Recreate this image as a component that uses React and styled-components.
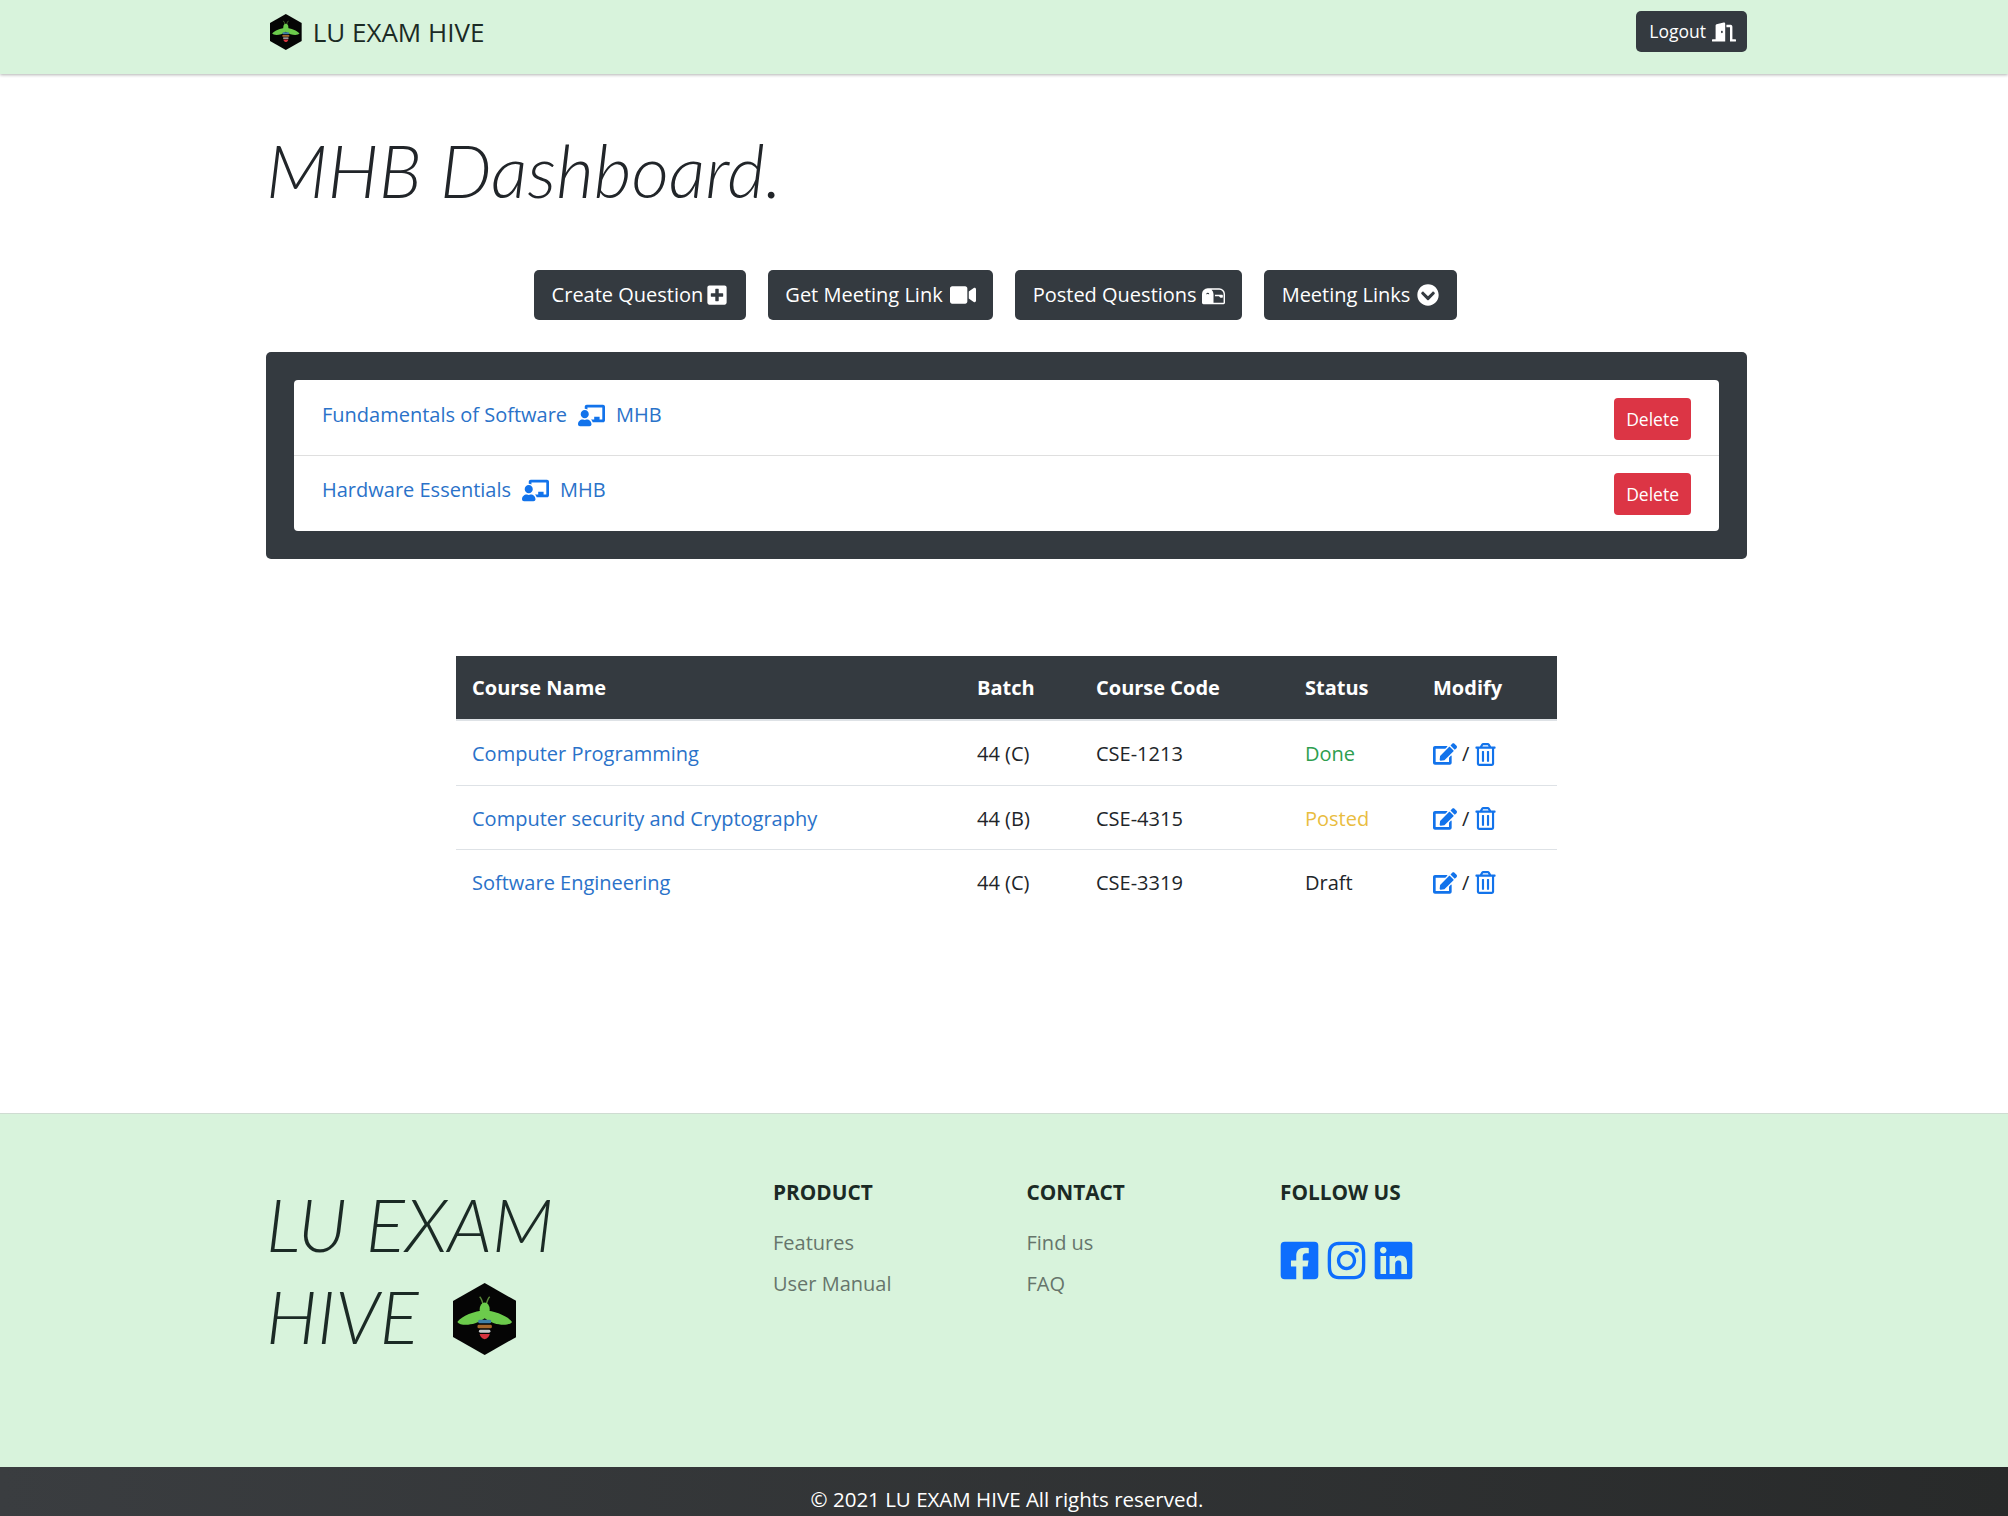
import React from 'react';
import styled, { createGlobalStyle } from 'styled-components';
import { BsMailbox2 } from 'react-icons/bs';
import {
  FaChalkboardTeacher,
  FaChevronCircleDown,
  FaDoorOpen,
  FaEdit,
  FaFacebookSquare,
  FaInstagram,
  FaLinkedin,
  FaPlusSquare,
  FaRegTrashAlt,
  FaVideo,
} from 'react-icons/fa';

const GlobalStyle = createGlobalStyle`
  html, body {
    margin: 0;
    padding: 0;
    background: #fff;
    color: #212529;
    font-family: "Open Sans", "Noto Sans", sans-serif;
    font-size: 20px;
    line-height: 1.5;
    overflow: hidden;
  }
  * {
    box-sizing: border-box;
  }
`;

const Page = styled.div`
  display: flex;
  flex-direction: column;
  height: 1516px;
  overflow: hidden;
`;

const Navbar = styled.nav`
  align-items: center;
  background: #d8f3dc;
  box-shadow: 0 1px 3px rgba(0, 0, 0, 0.3);
  display: flex;
  flex: none;
  height: 74px;
  justify-content: space-between;
  padding: 0 261px 0 270px;
`;

const Brand = styled.div`
  align-items: center;
  color: #1b2a25;
  display: flex;
  font-size: 26px;
  gap: 11px;
  margin-top: -10px;
`;

const NavButton = styled.button`
  align-items: center;
  background: #343a40;
  border: 0;
  border-radius: 5px;
  color: #fff;
  display: flex;
  font: inherit;
  font-size: 17.5px;
  gap: 6px;
  height: 41px;
  margin-top: -11px;
  padding: 0 11px 0 13px;
`;

const Content = styled.main`
  flex: 1;
  padding: 0 261px 0 266px;
`;

const Title = styled.h1`
  color: #212529;
  font-family: Lato, sans-serif;
  font-size: 73px;
  font-style: italic;
  font-weight: 300;
  line-height: 89px;
  margin: 52px 0 0;
`;

const Actions = styled.div`
  display: flex;
  gap: 22px;
  justify-content: center;
  margin-right: 22px;
  margin-top: 55px;
`;

const ActionButton = styled.button`
  align-items: center;
  background: #343a40;
  border: 0;
  border-radius: 5px;
  color: #fff;
  display: flex;
  font: inherit;
  gap: ${props => props.$gap}px;
  height: 50px;
  padding: 0 17.5px;
`;

const LinksPanel = styled.section`
  background: #343a40;
  border-radius: 5px;
  margin-top: 32px;
  padding: 28px;
`;

const LinksList = styled.div`
  background: #fff;
  border-radius: 4px;
`;

const LinkRow = styled.div`
  align-items: flex-start;
  border-top: ${props => (props.$first ? '0' : '1px solid #dfdfdf')};
  display: flex;
  height: ${props => (props.$first ? 75 : 76)}px;
  justify-content: space-between;
  padding: ${props => (props.$first ? 18 : 17)}px 28px 0;
`;

const MeetingLink = styled.a`
  align-items: center;
  color: #2a72c9;
  display: flex;
  gap: 11px;
  line-height: 30px;
  margin-top: 2px;
`;

const DeleteButton = styled.button`
  background: #dc3545;
  border: 0;
  border-radius: 4px;
  color: #fff;
  font: inherit;
  font-size: 17.5px;
  height: 42px;
  padding: 0 12px;
`;

const CourseTable = styled.table`
  border-collapse: collapse;
  margin: 97px auto 0;
  table-layout: fixed;
  width: 1101px;

  tbody tr:first-child td {
    height: 65px;
  }
`;

const HeadCell = styled.th`
  background: #343a40;
  border-bottom: 2px solid #dee2e6;
  color: #fff;
  font-weight: 700;
  height: 64px;
  padding: 0 16px;
  text-align: left;
  width: ${props => props.$width}px;
`;

const BodyCell = styled.td`
  border-bottom: ${props => (props.$last ? '0' : '1px solid #dee2e6')};
  color: ${props => props.$color || '#212529'};
  height: 64px;
  padding: 3px 16px 0;
`;

const CourseLink = styled.a`
  color: #2a72c9;
`;

const ModifyIcons = styled.div`
  align-items: center;
  color: #1273eb;
  display: flex;
  gap: 5px;

  span {
    color: #212529;
  }
`;

const Footer = styled.footer`
  background: #d8f3dc;
  border-top: 1px solid #cfdcd2;
  display: flex;
  flex: none;
  height: 354px;
  padding: 50px 0 0 266px;
`;

const FooterBrand = styled.div`
  color: #1b2a25;
  font-family: Lato, sans-serif;
  font-size: 73px;
  font-style: italic;
  font-weight: 300;
  line-height: 92px;
  padding-top: 14px;
  width: 507px;
`;

const BrandLine = styled.div`
  align-items: center;
  display: flex;
  gap: 34px;
`;

const BrandBee = styled.span`
  display: flex;
  margin-top: 5px;
`;

const FooterColumn = styled.div`
  padding-top: 5px;
  width: 253.5px;
`;

const ColumnTitle = styled.h5`
  color: #1b2a25;
  font-size: 20.8px;
  font-weight: 700;
  line-height: 30px;
  margin: 8px 0 21px;
`;

const FooterLink = styled.div`
  color: #66756b;
  line-height: 30px;
  margin-bottom: 11px;
`;

const Socials = styled.div`
  color: #0d6efd;
  display: flex;
  gap: 4px;
  margin-left: -2px;
  margin-top: 32px;
`;

const Copyright = styled.div`
  background: linear-gradient(90deg, #3a3d40, #282a2a);
  color: #fff;
  flex: none;
  font-size: 20.5px;
  height: 49px;
  padding: 17px 0 0 6px;
  text-align: center;
`;

const Bee = ({ size }) => (
  <svg width={size * 0.88} height={size} viewBox="0 0 88 100">
    <path d="M44 0 88 25V75L44 100 0 75V25Z" fill="#050505" />
    <path d="M37 19C40 22 41 26 42 31M51 19C48 22 47 26 46 31" stroke="#5c8a3a" strokeWidth="2" fill="none" />
    <ellipse cx="44" cy="37" rx="7" ry="10" fill="#6ccb4c" />
    <path d="M44 38C30 39 12 46 6 54 10 60 30 60 44 49 58 60 78 60 82 54 76 46 58 39 44 38Z" fill="#6ccb4c" />
    <rect x="35" y="51" width="18" height="5" rx="2" fill="#3f7fa8" />
    <rect x="34" y="58" width="20" height="5" rx="2" fill="#a8682c" />
    <rect x="36" y="65" width="16" height="4" rx="2" fill="#c9c9c9" />
    <path d="M37 71H51C50 76 46 78 44 78 42 78 38 76 37 71Z" fill="#d8333f" />
  </svg>
);

const actions = [
  { label: 'Create Question', Icon: FaPlusSquare, size: 22, gap: 3 },
  { label: 'Get Meeting Link', Icon: FaVideo, size: 26, gap: 7 },
  { label: 'Posted Questions', Icon: BsMailbox2, size: 23, gap: 5 },
  { label: 'Meeting Links', Icon: FaChevronCircleDown, size: 22, gap: 7 },
];

const meetings = ['Fundamentals of Software', 'Hardware Essentials'];

const courses = [
  { name: 'Computer Programming', batch: '44 (C)', code: 'CSE-1213', status: 'Done', color: '#2e9e4f' },
  { name: 'Computer security and Cryptography', batch: '44 (B)', code: 'CSE-4315', status: 'Posted', color: '#e9bd3f' },
  { name: 'Software Engineering', batch: '44 (C)', code: 'CSE-3319', status: 'Draft' },
];

export default function App() {
  return (
    <Page>
      <GlobalStyle />
      <Navbar>
        <Brand>
          <Bee size={36} />
          LU EXAM HIVE
        </Brand>
        <NavButton>
          Logout
          <FaDoorOpen size={24} />
        </NavButton>
      </Navbar>
      <Content>
        <Title>MHB Dashboard.</Title>
        <Actions>
          {actions.map(({ label, Icon, size, gap }) => (
            <ActionButton key={label} $gap={gap}>
              {label}
              <Icon size={size} />
            </ActionButton>
          ))}
        </Actions>
        <LinksPanel>
          <LinksList>
            {meetings.map((name, i) => (
              <LinkRow key={name} $first={i === 0}>
                <MeetingLink>
                  {name}
                  <FaChalkboardTeacher size={27} color="#1273eb" />
                  MHB
                </MeetingLink>
                <DeleteButton>Delete</DeleteButton>
              </LinkRow>
            ))}
          </LinksList>
        </LinksPanel>
        <CourseTable>
          <thead>
            <tr>
              <HeadCell $width={505}>Course Name</HeadCell>
              <HeadCell $width={119}>Batch</HeadCell>
              <HeadCell $width={209}>Course Code</HeadCell>
              <HeadCell $width={128}>Status</HeadCell>
              <HeadCell $width={140}>Modify</HeadCell>
            </tr>
          </thead>
          <tbody>
            {courses.map((course, i) => {
              const last = i === courses.length - 1;
              return (
                <tr key={course.code}>
                  <BodyCell $last={last}><CourseLink>{course.name}</CourseLink></BodyCell>
                  <BodyCell $last={last}>{course.batch}</BodyCell>
                  <BodyCell $last={last}>{course.code}</BodyCell>
                  <BodyCell $last={last} $color={course.color}>{course.status}</BodyCell>
                  <BodyCell $last={last}>
                    <ModifyIcons>
                      <FaEdit size={24} />
                      <span>/</span>
                      <FaRegTrashAlt size={23} />
                    </ModifyIcons>
                  </BodyCell>
                </tr>
              );
            })}
          </tbody>
        </CourseTable>
      </Content>
      <Footer>
        <FooterBrand>
          LU EXAM
          <BrandLine>
            HIVE
            <BrandBee>
              <Bee size={72} />
            </BrandBee>
          </BrandLine>
        </FooterBrand>
        <FooterColumn>
          <ColumnTitle>PRODUCT</ColumnTitle>
          <FooterLink>Features</FooterLink>
          <FooterLink>User Manual</FooterLink>
        </FooterColumn>
        <FooterColumn>
          <ColumnTitle>CONTACT</ColumnTitle>
          <FooterLink>Find us</FooterLink>
          <FooterLink>FAQ</FooterLink>
        </FooterColumn>
        <FooterColumn>
          <ColumnTitle>FOLLOW US</ColumnTitle>
          <Socials>
            <FaFacebookSquare size={43} />
            <FaInstagram size={43} />
            <FaLinkedin size={43} />
          </Socials>
        </FooterColumn>
      </Footer>
      <Copyright>© 2021 LU EXAM HIVE All rights reserved.</Copyright>
    </Page>
  );
}
